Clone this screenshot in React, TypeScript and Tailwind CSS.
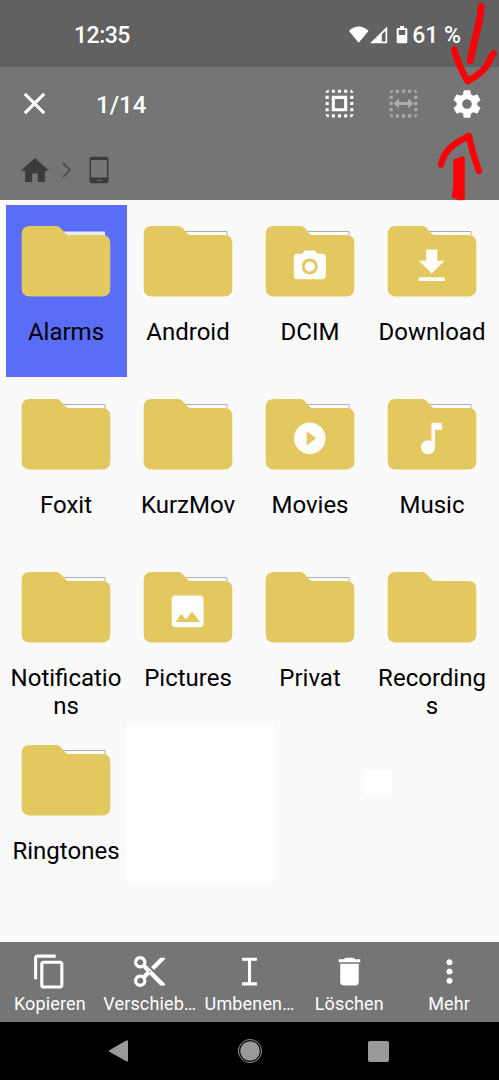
import React from 'react';

const DOTTED_FRAME =
  'M3 5h2V3c-1.1 0-2 .9-2 2zm0 8h2v-2H3v2zm4 8h2v-2H7v2zM3 9h2V7H3v2zm10-6h-2v2h2V3zm6 0v2h2c0-1.1-.9-2-2-2zM5 21v-2H3c0 1.1.9 2 2 2zm-2-4h2v-2H3v2zM9 3H7v2h2V3zm2 18h2v-2h-2v2zm8-8h2v-2h-2v2zm0 8c1.1 0 2-.9 2-2h-2v2zm0-12h2V7h-2v2zm0 8h2v-2h-2v2zm-4 4h2v-2h-2v2zm0-16h2V3h-2v2z';

const GLYPHS = {
  camera: {
    d: 'M9 2 7.17 4H4c-1.1 0-2 .9-2 2v12c0 1.1.9 2 2 2h16c1.1 0 2-.9 2-2V6c0-1.1-.9-2-2-2h-3.17L15 2H9zm3 15c-2.76 0-5-2.24-5-5s2.24-5 5-5 5 2.24 5 5-2.24 5-5 5zm0-1.8a3.2 3.2 0 1 0 0-6.4 3.2 3.2 0 0 0 0 6.4z',
    transform: 'translate(41.6 42.3) scale(1.6)',
  },
  download: {
    d: 'M19 9h-4V3H9v6H5l7 7 7-7zM5 18v2h14v-2H5z',
    transform: 'translate(38.5 39) scale(1.85)',
  },
  play: {
    d: 'M12 2C6.48 2 2 6.48 2 12s4.48 10 10 10 10-4.48 10-10S17.52 2 12 2zm-2 14.5v-9l6 4.5-6 4.5z',
    transform: 'translate(41.9 41.4) scale(1.58)',
  },
  music: {
    d: 'M12 3v10.55c-.59-.34-1.27-.55-2-.55-2.21 0-4 1.79-4 4s1.79 4 4 4 4-1.79 4-4V7h4V3h-6z',
    transform: 'translate(39.5 39.4) scale(1.75)',
  },
  image: {
    d: 'M21 19V5c0-1.1-.9-2-2-2H5c-1.1 0-2 .9-2 2v14c0 1.1.9 2 2 2h14c1.1 0 2-.9 2-2zM8.5 13.5l2.5 3.01L14.5 12l4.5 6H5l3.5-4.5z',
    transform: 'translate(39.4 39.2) scale(1.77)',
  },
};

type Folder = {
  name: string;
  glyph?: keyof typeof GLYPHS;
  selected?: boolean;
  empty?: boolean;
};

const folders: Folder[] = [
  { name: 'Alarms', selected: true },
  { name: 'Android' },
  { name: 'DCIM', glyph: 'camera' },
  { name: 'Download', glyph: 'download' },
  { name: 'Foxit' },
  { name: 'KurzMov' },
  { name: 'Movies', glyph: 'play' },
  { name: 'Music', glyph: 'music' },
  { name: 'Notifications' },
  { name: 'Pictures', glyph: 'image' },
  { name: 'Privat' },
  { name: 'Recordings', empty: true },
  { name: 'Ringtones' },
];

const actions = [
  {
    label: 'Kopieren',
    d: 'M16 1H4c-1.1 0-2 .9-2 2v14h2V3h12V1zm3 4H8c-1.1 0-2 .9-2 2v14c0 1.1.9 2 2 2h11c1.1 0 2-.9 2-2V7c0-1.1-.9-2-2-2zm0 16H8V7h11v14z',
  },
  {
    label: 'Verschieb…',
    d: 'M9.64 7.64c.23-.5.36-1.05.36-1.64 0-2.21-1.79-4-4-4S2 3.79 2 6s1.79 4 4 4c.59 0 1.14-.13 1.64-.36L10 12l-2.36 2.36C7.14 14.13 6.59 14 6 14c-2.21 0-4 1.79-4 4s1.79 4 4 4 4-1.79 4-4c0-.59-.13-1.14-.36-1.64L12 14l7 7h3v-1L9.64 7.64zM6 8c-1.1 0-2-.89-2-2s.9-2 2-2 2 .89 2 2-.9 2-2 2zm0 12c-1.1 0-2-.89-2-2s.9-2 2-2 2 .89 2 2-.9 2-2 2zm6-7.5c-.28 0-.5-.22-.5-.5s.22-.5.5-.5.5.22.5.5-.22.5-.5.5zM19 3l-6 6 2 2 7-7V3z',
  },
  { label: 'Umbenen…', d: 'M7.2 3h9.6v2H13v14h3.8v2H7.2v-2H11V5H7.2z' },
  {
    label: 'Löschen',
    d: 'M6 19c0 1.1.9 2 2 2h8c1.1 0 2-.9 2-2V7H6v12zM19 4h-3.5q-.2-1-1.2-1h-4.6q-1 0-1.2 1H5v2h14V4z',
  },
  {
    label: 'Mehr',
    d: 'M12 8c1.1 0 2-.9 2-2s-.9-2-2-2-2 .9-2 2 .9 2 2 2zm0 2c-1.1 0-2 .9-2 2s.9 2 2 2 2-.9 2-2-.9-2-2-2zm0 6c-1.1 0-2 .9-2 2s.9 2 2 2 2-.9 2-2-.9-2-2-2z',
  },
];

const Icon: React.FC<{ d: string; className?: string }> = ({ d, className }) => (
  <svg viewBox="0 0 24 24" fill="currentColor" className={className}>
    <path fillRule="evenodd" d={d} />
  </svg>
);

const StatusBar: React.FC = () => (
  <div className="flex h-[67px] items-center bg-[#616161] pt-[3px] pl-[74px] pr-[38px] text-white">
    <span className="text-[23px] leading-none font-medium tracking-[-0.5px]">12:35</span>
    <svg width="60" height="20" viewBox="0 0 60 20" fill="currentColor" className="ml-auto">
      <path d="M1 6C3.5 3.2 7 1.6 10.700 1.6S18 3.200 20.500 6L10.700 17.800z" />
      <path fillRule="evenodd" d="M22 18.300 39.200 1.600V18.300zM33.800 9.300V16.600H37.500V5.700z" />
      <path fillRule="evenodd" d="M52 1h4v2h2q1.300 0 1.300 1.300v12.700q0 1.300-1.300 1.300h-8q-1.300 0-1.300-1.300V4.300Q48.700 3 50 3h2zM50.800 5v5h6.400V5z" />
    </svg>
    <span className="ml-[4px] text-[23px] leading-none font-medium whitespace-nowrap">61 %</span>
  </div>
);

const Header: React.FC = () => (
  <header className="h-[133px] bg-[#757575] text-white">
    <div className="flex h-[73px] items-center">
      <Icon
        className="ml-[16px] size-[37px]"
        d="M19 6.41 17.59 5 12 10.59 6.41 5 5 6.41 10.59 12 5 17.59 6.41 19 12 13.41 17.59 19 19 17.59 13.41 12z"
      />
      <span className="ml-[43px] pt-[2px] text-[24px] leading-none font-medium">1/14</span>
      <div className="ml-auto flex items-center pr-[14px]">
        <Icon className="size-[37px]" d={`${DOTTED_FRAME}M7 17h10V7H7v10zm2-8h6v6H9V9z`} />
        <Icon
          className="ml-[27px] size-[37px] text-[#acacac]"
          d={`${DOTTED_FRAME}M5.500 12l3.500-3.200V11h6V8.800L18.500 12l-3.500 3.200V13H9v2.200z`}
        />
        <Icon
          className="ml-[27px] size-[36px] p-[1.5px]"
          d="M19.43 12.98c.04-.32.07-.64.07-.98s-.03-.66-.07-.98l2.11-1.65c.19-.15.24-.42.12-.64l-2-3.46c-.12-.22-.39-.3-.61-.22l-2.49 1c-.52-.4-1.08-.73-1.69-.98l-.38-2.65C14.46 2.18 14.25 2 14 2h-4c-.25 0-.46.18-.49.42l-.38 2.65c-.61.25-1.17.59-1.69.98l-2.49-1c-.23-.09-.49 0-.61.22l-2 3.46c-.13.22-.07.49.12.64l2.11 1.65c-.04.32-.07.65-.07.98s.03.66.07.98l-2.11 1.65c-.19.15-.24.42-.12.64l2 3.46c.12.22.39.3.61.22l2.49-1c.52.4 1.08.73 1.69.98l.38 2.65c.03.24.24.42.49.42h4c.25 0 .46-.18.49-.42l.38-2.65c.61-.25 1.17-.59 1.69-.98l2.49 1c.23.09.49 0 .61-.22l2-3.46c.12-.22.07-.49-.12-.64l-2.11-1.65zM12 15.5c-1.93 0-3.5-1.57-3.5-3.5s1.57-3.5 3.5-3.5 3.5 1.57 3.5 3.5-1.57 3.5-3.5 3.5z"
        />
      </div>
    </div>
    <div className="flex h-[60px] items-center pl-[18px] text-[#3b3b3b]">
      <Icon className="size-[34px]" d="M10 20.5v-6h4v6h5v-8h3L12 3.5 2 12.5h3v8z" />
      <svg width="12" height="18" viewBox="0 0 12 18" fill="none" className="ml-[9px]">
        <path d="M2 2 9 9 2 16" stroke="#4d4d4d" strokeWidth="1.8" />
      </svg>
      <svg width="22" height="28" viewBox="0 0 22 28" fill="currentColor" className="ml-[15px]">
        <path
          fillRule="evenodd"
          d="M4 .8h14q2.500 0 2.500 2.500v21.400q0 2.500-2.500 2.500H4q-2.500 0-2.500-2.500V3.300q0-2.500 2.500-2.500zM3 4v17.500h16V4zM8.500 23.700v1h5v-1z"
        />
      </svg>
    </div>
  </header>
);

const FolderTile: React.FC<{ folder: Folder }> = ({ folder }) => {
  const glyph = folder.glyph && GLYPHS[folder.glyph];

  return (
    <div className="h-[173px] px-px pb-px">
      <div
        className={`-mx-[0.5px] flex h-full flex-col items-center ${folder.selected ? 'bg-[#596df7]' : ''}`}
      >
        <svg width="122" height="113" viewBox="0 0 122 113" className="-mx-1 shrink-0">
          {!folder.empty && (
            <path
              d="M55 26.5h45v8H55z"
              fill={folder.selected ? '#e9ecf3' : '#ffffff'}
              stroke={folder.selected ? '#e9ecf3' : '#a4a5aa'}
              strokeWidth={folder.selected ? 0 : 0.9}
            />
          )}
          <path
            d="M25 20.9H51.5q2 0 3.5 1.5l5.500 6q1.500 1.500 3.500 1.500h33q8.300 0 8.300 8.300v45q0 8.300-8.300 8.300H25q-8.300 0-8.300-8.300V29.200q0-8.300 8.300-8.300z"
            fill="#e3c75f"
          />
          {glyph && <path fillRule="evenodd" fill="#fff" {...glyph} />}
        </svg>
        <span className="w-[114px] text-center text-[24px] leading-[28px] break-all text-black">
          {folder.name}
        </span>
      </div>
    </div>
  );
};

// Hand-drawn arrows pointing at the settings button
const Scribble: React.FC = () => (
  <svg
    width="69"
    height="204"
    viewBox="430 0 69 204"
    fill="none"
    stroke="#fb0007"
    strokeLinecap="round"
    strokeLinejoin="round"
    className="pointer-events-none absolute top-0 right-0"
  >
    <path d="M481.3 6.5C480 22 477 31 474.5 41L470.3 60.5" strokeWidth="7" />
    <path d="M454.3 49.5C457 62 461 70 467.5 81C477 76 486 70 488.5 62L493.500 53.500" strokeWidth="6.5" />
    <path d="M441 164.500C443 156 447 150 453 145.500C459 140 463 139 469 136C472 152 475 160 479 171" strokeWidth="6.5" />
    <path
      d="M455.5 161 462.500 158.500V198H459L454.200 196 455.500 186z"
      fill="#fb0007"
      strokeWidth="4.5"
    />
  </svg>
);

const App: React.FC = () => {
  return (
    <div className="relative flex h-[1080px] w-[499px] flex-col overflow-hidden bg-[#fafafa] font-['Roboto',sans-serif]">
      <StatusBar />
      <Header />

      <main className="relative flex-1 pt-[5px] pl-[5px]">
        <div className="grid w-[488px] grid-cols-4">
          {folders.map((folder) => (
            <FolderTile key={folder.name} folder={folder} />
          ))}
        </div>
        <div className="absolute top-[525px] left-[126px] h-[156px] w-[149px] bg-white" />
        <div className="absolute top-[570px] left-[364px] h-[25px] w-[28px] bg-white" />
      </main>

      <footer className="grid h-[80px] grid-cols-5 bg-[#757575] text-white">
        {actions.map((action) => (
          <div key={action.label} className="flex flex-col items-center pt-[11px]">
            <Icon d={action.d} className="size-[37px] shrink-0" />
            <span className="mt-[3px] text-[18px] leading-[21px] tracking-[0.15px] whitespace-nowrap">
              {action.label}
            </span>
          </div>
        ))}
      </footer>

      <nav className="flex h-[58px] items-center justify-between bg-black pr-[110px] pl-[108px] text-[#999]">
        <svg width="21" height="24" viewBox="0 0 21 24" fill="currentColor">
          <path d="M1.3 11.2 18.3 1.5Q20 .8 20 2.5V21.5Q20 23.2 18.3 22.3L1.3 12.8Q.3 12 1.3 11.2z" />
        </svg>
        <svg width="26" height="26" viewBox="0 0 26 26" className="ml-[2px]">
          <circle cx="13" cy="13" r="11.5" fill="none" stroke="currentColor" />
          <circle cx="13" cy="13" r="9.8" fill="currentColor" />
        </svg>
        <div className="size-[21px] rounded-[2px] bg-[#999]" />
      </nav>

      <Scribble />
    </div>
  );
};

export default App;
